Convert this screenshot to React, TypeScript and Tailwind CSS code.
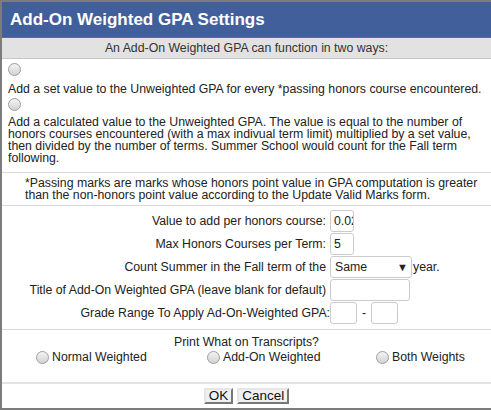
import React from 'react'

const font = "font-['Liberation_Sans',Arial,sans-serif]"

function Radio() {
  return (
    <span className="inline-block w-[13px] h-[13px] shrink-0 rounded-full border border-[#9c9c9c] bg-gradient-to-b from-[#f4f4f4] to-[#d2d2d2]" />
  )
}

function Field({ w, value }: { w: string; value?: string }) {
  return (
    <div className={`${w} h-[22px] border border-[#cbcbcb] rounded-[3px] bg-white overflow-hidden pl-[3px] text-[12.3px] leading-[20px] text-[#222] whitespace-nowrap`}>
      {value}
    </div>
  )
}

export default function App() {
  const rows = [
    { label: 'Value to add per honors course:', el: <Field w="w-[24px]" value="0.02" /> },
    { label: 'Max Honors Courses per Term:', el: <Field w="w-[24px]" value="5" /> },
    {
      label: 'Count Summer in the Fall term of the',
      el: (
        <div className="flex items-center">
          <div className="w-[82px] h-[22px] border border-[#cbcbcb] rounded-[3px] bg-white flex items-center justify-between pl-[4px] pr-[3px] text-[12.3px]">
            <span>Same</span>
            <span className="text-[11px] text-[#222]">▼</span>
          </div>
          <span className="ml-[1px] text-[12.3px]">year.</span>
        </div>
      ),
    },
    { label: 'Title of Add-On Weighted GPA (leave blank for default)', el: <Field w="w-[80px]" /> },
    {
      label: 'Grade Range To Apply Ad-On-Weighted GPA:',
      tight: true,
      el: (
        <div className="flex items-center">
          <Field w="w-[27px]" />
          <span className="mx-[5px] text-[12.3px]">-</span>
          <Field w="w-[27px]" />
        </div>
      ),
    },
  ]

  return (
    <div className={`w-[491px] h-[410px] overflow-hidden bg-white text-[#222] ${font}`}>
      <div className="h-[410px] border-l-2 border-t-2 border-b-2 border-[#7c7c7c] flex flex-col">
        {/* Title bar */}
        <div className="h-[36px] bg-[#41609b] border-b border-[#6d6d6d] flex items-center pl-[8px]">
          <span className="text-white text-[17px] font-bold">Add-On Weighted GPA Settings</span>
        </div>

        {/* Intro band */}
        <div className="h-[21px] bg-[#e2e2e2] border-b border-[#c8c8c8] flex items-center justify-center text-[12.3px] text-[#333]">
          An Add-On Weighted GPA can function in two ways:
        </div>

        {/* Options */}
        <div className="pt-[4px] pb-[8px] pl-[6px] border-b border-[#d9d9d9] text-[12.3px] leading-[12px] whitespace-nowrap">
          <Radio />
          <div className="mt-[5px]">Add a set value to the Unweighted GPA for every *passing honors course encountered.</div>
          <div className="mt-[3px] h-[13px]">
            <Radio />
          </div>
          <div className="mt-[5px]">
            Add a calculated value to the Unweighted GPA. The value is equal to the number of
            <br />
            honors courses encountered (with a max indivual term limit) multiplied by a set value,
            <br />
            then divided by the number of terms. Summer School would count for the Fall term
            <br />
            following.
          </div>
        </div>

        {/* Note */}
        <div className="pt-[4px] pb-[4px] pl-[23px] border-b border-[#d9d9d9] text-[12.3px] leading-[12px] whitespace-nowrap">
          *Passing marks are marks whose honors point value in GPA computation is greater
          <br />
          than the non-honors point value according to the Update Valid Marks form.
        </div>

        {/* Form */}
        <div className="pt-[4px] pb-[4px] border-b border-[#d9d9d9]">
          {rows.map((r) => (
            <div key={r.label} className="grid grid-cols-[328px_1fr] h-[23px]">
              <div className={`text-right text-[12.3px] leading-[22px] whitespace-nowrap ${r.tight ? 'pr-0' : 'pr-[4px]'}`}>{r.label}</div>
              <div>{r.el}</div>
            </div>
          ))}
        </div>

        {/* Print options */}
        <div className="h-[54px] border-b-2 border-[#e3e3e3] text-[12.3px]">
          <div className="text-center pt-[6px] leading-[12px]">Print What on Transcripts?</div>
          <div className="flex items-center pl-[34px]">
            <div className="w-[171px] flex items-center gap-[3px]">
              <Radio />
              <span>Normal Weighted</span>
            </div>
            <div className="w-[169px] flex items-center gap-[3px]">
              <Radio />
              <span>Add-On Weighted</span>
            </div>
            <div className="flex items-center gap-[3px]">
              <Radio />
              <span>Both Weights</span>
            </div>
          </div>
        </div>

        {/* Buttons */}
        <div className="flex-1 flex justify-center items-start pt-[4px] gap-[4px]">
          <button className="h-[16px] px-[3px] bg-[#f0f0f0] border-2 border-t-[#e6e6e6] border-l-[#e6e6e6] border-r-[#777] border-b-[#777] text-[13.5px] leading-[12px] text-[#111]">
            OK
          </button>
          <button className="h-[16px] px-[3px] bg-[#f0f0f0] border-2 border-t-[#e6e6e6] border-l-[#e6e6e6] border-r-[#777] border-b-[#777] text-[13.5px] leading-[12px] text-[#111]">
            Cancel
          </button>
        </div>
      </div>
    </div>
  )
}
